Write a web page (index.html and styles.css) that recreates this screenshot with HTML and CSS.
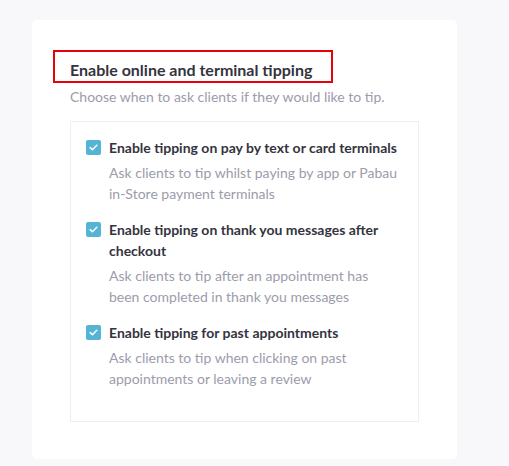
FILE: index.html
```html
<!DOCTYPE html>
<html lang="en">
<head>
    <meta charset="UTF-8">
    <meta name="viewport" content="width=device-width, initial-scale=1.0">
    <title>Tipping Settings</title>
    <link rel="stylesheet" href="styles.css">
</head>
<body>
    <div class="card">
        <h3 class="title"><span class="mark">Enable online and terminal tipping</span></h3>
        <p class="subtitle">Choose when to ask clients if they would like to tip.</p>

        <div class="options">
            <div class="option">
                <span class="check"><svg viewBox="0 0 15 15" width="15" height="15"><path d="M4.2 7.6l2.2 2.2 4.4-4.6" fill="none" stroke="#fff" stroke-width="1.5" stroke-linecap="round" stroke-linejoin="round"/></svg></span>
                <div class="text">
                    <div class="label">Enable tipping on pay by text or card terminals</div>
                    <div class="desc">Ask clients to tip whilst paying by app or Pabau in-Store payment terminals</div>
                </div>
            </div>
            <div class="option">
                <span class="check"><svg viewBox="0 0 15 15" width="15" height="15"><path d="M4.2 7.6l2.2 2.2 4.4-4.6" fill="none" stroke="#fff" stroke-width="1.5" stroke-linecap="round" stroke-linejoin="round"/></svg></span>
                <div class="text">
                    <div class="label">Enable tipping on thank you messages after checkout</div>
                    <div class="desc">Ask clients to tip after an appointment has been completed in thank you messages</div>
                </div>
            </div>
            <div class="option">
                <span class="check"><svg viewBox="0 0 15 15" width="15" height="15"><path d="M4.2 7.6l2.2 2.2 4.4-4.6" fill="none" stroke="#fff" stroke-width="1.5" stroke-linecap="round" stroke-linejoin="round"/></svg></span>
                <div class="text">
                    <div class="label">Enable tipping for past appointments</div>
                    <div class="desc">Ask clients to tip when clicking on past appointments or leaving a review</div>
                </div>
            </div>
        </div>
    </div>
</body>
</html>
```

FILE: styles.css
```css
body {
    font-family: Lato, "Open Sans", Arial, sans-serif;
    background-color: #f8f8fa;
    margin: 0;
    padding: 20px 0 0 32px;
}
.card {
    background: white;
    width: 349px;
    height: 409px;
    padding: 30px 38px 0 38px;
    border-radius: 5px;
}
.title {
    margin: 0;
    font-size: 16px;
    font-weight: 700;
    color: #34343e;
    line-height: 21px;
}
.mark {
    display: inline-block;
    margin-left: -17px;
    padding: 7px 19px 1px 15px;
    border: 2px solid #e8000b;
}
.subtitle {
    margin: 3px 0 0 0;
    font-size: 14px;
    line-height: 21px;
    color: #9c9cab;
}
.options {
    margin-top: 14px;
    border: 1px solid #eeeeef;
    padding: 15px 20px 32px 15px;
}
.option {
    display: flex;
    gap: 8px;
    margin-bottom: 15px;
}
.option:last-child {
    margin-bottom: 0;
}
.check {
    flex: none;
    width: 15px;
    height: 15px;
    margin-top: 3px;
    border-radius: 2px;
    background-color: #55b3d5;
    display: flex;
}
.label {
    font-size: 14px;
    font-weight: 700;
    color: #34343e;
    line-height: 21px;
}
.desc {
    margin-top: 4px;
    font-size: 14px;
    line-height: 21px;
    color: #9c9cab;
}
```
